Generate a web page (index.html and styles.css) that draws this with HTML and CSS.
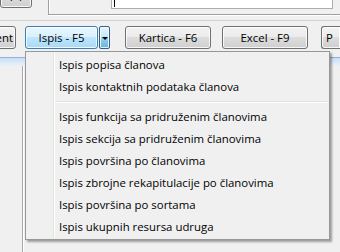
FILE: index.html
```html
<!DOCTYPE html>
<html>
<head>
<meta charset="utf-8">
<link rel="stylesheet" href="styles.css">
</head>
<body>
<div class="top">
  <div class="btn btn-f4">F4</div>
  <div class="group">
    <span class="lbl">Traži</span>
    <div class="textbox"><span class="caret"></span></div>
  </div>
</div>
<div class="toolbar">
  <div class="btn btn-left">Dokument</div>
  <div class="btn btn-blue btn-ispis">Ispis - F5</div>
  <div class="btn btn-arrow"><span class="tri"></span></div>
  <div class="btn btn-kartica">Kartica - F6</div>
  <div class="btn btn-excel">Excel - F9</div>
  <div class="btn btn-p">P</div>
</div>
<div class="grid">
  <div class="grid-head"></div>
  <div class="grid-body"></div>
</div>
<div class="menu">
  <div class="item">Ispis popisa članova</div>
  <div class="item">Ispis kontaktnih podataka članova</div>
  <div class="sep"></div>
  <div class="item">Ispis funkcija sa pridruženim članovima</div>
  <div class="item">Ispis sekcija sa pridruženim članovima</div>
  <div class="item">Ispis površina po članovima</div>
  <div class="item">Ispis zbrojne rekapitulacije po članovima</div>
  <div class="item">Ispis površina po sortama</div>
  <div class="item">Ispis ukupnih resursa udruga</div>
</div>
</body>
</html>
```
FILE: styles.css
```css
html, body {
  margin: 0;
  padding: 0;
}
body {
  width: 340px;
  height: 252px;
  overflow: hidden;
  position: relative;
  background: #f0f0f0;
  font-family: "Open Sans", "Noto Sans", sans-serif;
  font-size: 11.4px;
  color: #000;
}
.top {
  display: flex;
  height: 20px;
  border-bottom: 1px solid #d2d2d2;
  overflow: hidden;
}
.btn {
  box-sizing: border-box;
  flex-shrink: 0;
  height: 23px;
  border: 1px solid #707070;
  border-radius: 3px;
  background: linear-gradient(#f2f2f2 0%, #ebebeb 50%, #dddddd 50%, #cfcfcf 100%);
  box-shadow: inset 0 0 0 1px rgba(255,255,255,0.8);
  text-align: center;
  line-height: 21px;
  white-space: nowrap;
  overflow: hidden;
}
.btn-f4 {
  width: 32px;
  margin-top: -15px;
}
.group {
  flex: 1;
  margin-left: 16px;
  height: 14px;
  border-left: 1px solid #a0a0a0;
  border-bottom: 1px solid #a0a0a0;
  box-shadow: inset 1px 0 0 #fff, 0 1px 0 #fff;
  display: flex;
  align-items: flex-start;
}
.lbl {
  margin-left: 19px;
  margin-top: -11px;
  line-height: 14px;
}
.textbox {
  box-sizing: border-box;
  margin-left: 18px;
  margin-top: -14px;
  width: 222px;
  height: 23px;
  background: #fff;
  border: 1px solid #abadb3;
  position: relative;
}
.caret {
  position: absolute;
  left: 2px;
  top: 12px;
  width: 1px;
  height: 8px;
  background: #000;
}
.toolbar {
  display: flex;
  margin-top: 5px;
  height: 23px;
  overflow: hidden;
}
.btn-left {
  width: 76px;
  margin-left: -60px;
  text-align: right;
  padding-right: 2px;
}
.btn-blue {
  border-color: #3c7fb1;
  background: linear-gradient(#eaf6fd 0%, #d9f0fc 50%, #bee6fd 50%, #a7d9f5 100%);
}
.btn-ispis {
  width: 73px;
  margin-left: 9px;
}
.btn-arrow {
  width: 11px;
  margin-left: 1px;
  border-color: #2c628b;
  border-radius: 2px;
  background: linear-gradient(#e5f4fc 0%, #c4e5f6 50%, #98d1ef 50%, #68b3db 100%);
  display: flex;
  align-items: center;
  justify-content: center;
}
.tri {
  width: 0;
  height: 0;
  border-left: 3px solid transparent;
  border-right: 3px solid transparent;
  border-top: 3px solid #000;
  margin-top: 1px;
}
.btn-kartica {
  width: 86px;
  margin-left: 15px;
}
.btn-excel {
  width: 86px;
  margin-left: 11px;
}
.btn-p {
  width: 19px;
  margin-left: 13px;
  text-align: left;
  padding-left: 4px;
  border-right: none;
  border-radius: 3px 0 0 3px;
}
.grid {
  margin-top: 8px;
}
.grid-head {
  height: 8px;
  border-top: 1px solid #8fb0d8;
  background: linear-gradient(#c9def3, #e9f2fb);
}
.grid-body {
  margin-left: 22px;
  height: 186px;
  border-left: 1px solid #a8a8a8;
  box-shadow: inset 1px 0 0 #fff;
}
.menu {
  position: absolute;
  left: 25px;
  top: 51px;
  width: 299px;
  padding: 2px 2px 1px 2px;
  background: #f0f0f0;
  border: 1px solid #979797;
  box-shadow: 2px 2px 2px rgba(0,0,0,0.35);
}
.menu::before {
  content: "";
  position: absolute;
  left: 27px;
  top: 1px;
  bottom: 1px;
  width: 1px;
  background: #e2e3e3;
  box-shadow: 1px 0 0 #fff;
}
.item {
  height: 22px;
  line-height: 22px;
  padding-left: 31px;
  white-space: nowrap;
}
.sep {
  height: 8px;
  margin-left: 29px;
  position: relative;
}
.sep::before {
  content: "";
  position: absolute;
  left: 0;
  right: 0;
  top: 3px;
  height: 1px;
  background: #e0e0e0;
  box-shadow: 0 1px 0 #fff;
}
```
